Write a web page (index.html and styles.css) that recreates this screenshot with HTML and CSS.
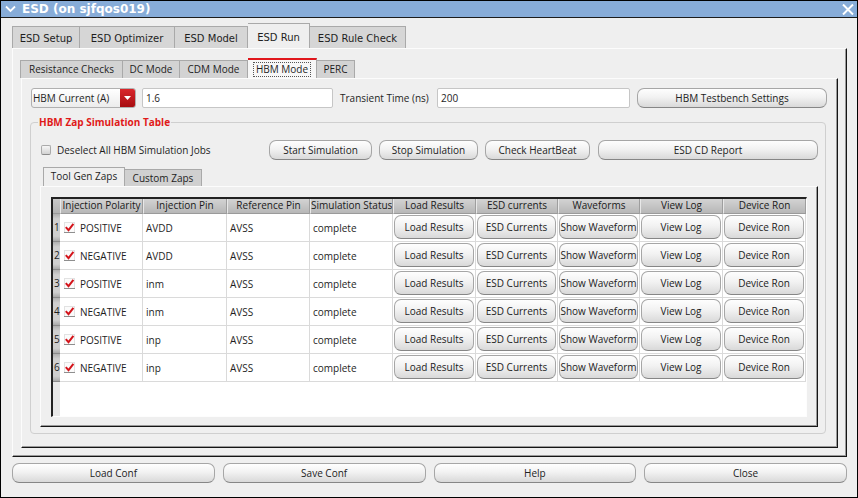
FILE: index.html
```html
<!DOCTYPE html>
<html>
<head>
<meta charset="utf-8">
<title>ESD</title>
<link rel="stylesheet" href="styles.css">
</head>
<body>
<div class="win">
  <div class="titlebar">
    <svg class="chev" width="11" height="8" viewBox="0 0 11 8"><polyline points="1,1.5 5.5,6 10,1.5" fill="none" stroke="#fff" stroke-width="1.8"/></svg>
    <span class="title">ESD (on sjfqos019)</span>
    <svg class="close" width="12" height="11" viewBox="0 0 12 11"><path d="M1 0.5 L11 10.5 M11 0.5 L1 10.5" stroke="#fff" stroke-width="2"/></svg>
  </div>
  <div class="content">
    <div class="tabs main-tabs">
      <div class="tab w-setup">ESD Setup</div>
      <div class="tab w-opt">ESD Optimizer</div>
      <div class="tab w-model">ESD Model</div>
      <div class="tab sel w-run">ESD Run</div>
      <div class="tab w-rule">ESD Rule Check</div>
    </div>
    <div class="panel main-panel">
      <div class="tabs sub-tabs">
        <div class="tab w-res">Resistance Checks</div>
        <div class="tab w-dc">DC Mode</div>
        <div class="tab w-cdm">CDM Mode</div>
        <div class="tab sel w-hbm"><span class="focus">HBM Mode</span></div>
        <div class="tab w-perc">PERC</div>
      </div>
      <div class="panel sub-panel">
        <div class="controls">
          <div class="combo"><span class="combo-text">HBM Current (A)</span><span class="combo-btn"><svg width="7" height="4" viewBox="0 0 7 4"><path d="M0 0 H7 L3.5 4 Z" fill="#fff"/></svg></span></div>
          <div class="field f1">1.6</div>
          <div class="lbl">Transient Time (ns)</div>
          <div class="field f2">200</div>
          <div class="btn b-tb">HBM Testbench Settings</div>
        </div>
        <fieldset class="group">
          <legend>HBM Zap Simulation Table</legend>
          <div class="actions">
            <span class="chk"></span>
            <span class="chk-lbl">Deselect All HBM Simulation Jobs</span>
            <div class="btn a1">Start Simulation</div>
            <div class="btn a2">Stop Simulation</div>
            <div class="btn a3">Check HeartBeat</div>
            <div class="btn a4">ESD CD Report</div>
          </div>
          <div class="tabs zap-tabs">
            <div class="tab sel w-tool">Tool Gen Zaps</div>
            <div class="tab w-custom">Custom Zaps</div>
          </div>
          <div class="panel zap-panel">
            <div class="tbl">
              <div class="corner"></div>
              <div class="th">Injection Polarity</div>
              <div class="th">Injection Pin</div>
              <div class="th">Reference Pin</div>
              <div class="th">Simulation Status</div>
              <div class="th">Load Results</div>
              <div class="th">ESD currents</div>
              <div class="th">Waveforms</div>
              <div class="th">View Log</div>
              <div class="th">Device Ron</div>

              <div class="rh">1</div>
              <div class="td"><svg class="ck" width="11" height="11" viewBox="0 0 11 11"><rect x="0.5" y="0.5" width="10" height="10" fill="#fbfbfb" stroke="#e2e2e2"/><line x1="0" y1="10.5" x2="11" y2="10.5" stroke="#8e8e8e"/><path d="M1.8 5.2 L4.5 8.2 L9.4 1.8" fill="none" stroke="#d3141b" stroke-width="2"/></svg>POSITIVE</div>
              <div class="td">AVDD</div>
              <div class="td">AVSS</div>
              <div class="td">complete</div>
              <div class="tb"><div class="btn">Load Results</div></div>
              <div class="tb"><div class="btn">ESD Currents</div></div>
              <div class="tb"><div class="btn">Show Waveform</div></div>
              <div class="tb"><div class="btn">View Log</div></div>
              <div class="tb"><div class="btn">Device Ron</div></div>

              <div class="rh">2</div>
              <div class="td"><svg class="ck" width="11" height="11" viewBox="0 0 11 11"><rect x="0.5" y="0.5" width="10" height="10" fill="#fbfbfb" stroke="#e2e2e2"/><line x1="0" y1="10.5" x2="11" y2="10.5" stroke="#8e8e8e"/><path d="M1.8 5.2 L4.5 8.2 L9.4 1.8" fill="none" stroke="#d3141b" stroke-width="2"/></svg>NEGATIVE</div>
              <div class="td">AVDD</div>
              <div class="td">AVSS</div>
              <div class="td">complete</div>
              <div class="tb"><div class="btn">Load Results</div></div>
              <div class="tb"><div class="btn">ESD Currents</div></div>
              <div class="tb"><div class="btn">Show Waveform</div></div>
              <div class="tb"><div class="btn">View Log</div></div>
              <div class="tb"><div class="btn">Device Ron</div></div>

              <div class="rh">3</div>
              <div class="td"><svg class="ck" width="11" height="11" viewBox="0 0 11 11"><rect x="0.5" y="0.5" width="10" height="10" fill="#fbfbfb" stroke="#e2e2e2"/><line x1="0" y1="10.5" x2="11" y2="10.5" stroke="#8e8e8e"/><path d="M1.8 5.2 L4.5 8.2 L9.4 1.8" fill="none" stroke="#d3141b" stroke-width="2"/></svg>POSITIVE</div>
              <div class="td">inm</div>
              <div class="td">AVSS</div>
              <div class="td">complete</div>
              <div class="tb"><div class="btn">Load Results</div></div>
              <div class="tb"><div class="btn">ESD Currents</div></div>
              <div class="tb"><div class="btn">Show Waveform</div></div>
              <div class="tb"><div class="btn">View Log</div></div>
              <div class="tb"><div class="btn">Device Ron</div></div>

              <div class="rh">4</div>
              <div class="td"><svg class="ck" width="11" height="11" viewBox="0 0 11 11"><rect x="0.5" y="0.5" width="10" height="10" fill="#fbfbfb" stroke="#e2e2e2"/><line x1="0" y1="10.5" x2="11" y2="10.5" stroke="#8e8e8e"/><path d="M1.8 5.2 L4.5 8.2 L9.4 1.8" fill="none" stroke="#d3141b" stroke-width="2"/></svg>NEGATIVE</div>
              <div class="td">inm</div>
              <div class="td">AVSS</div>
              <div class="td">complete</div>
              <div class="tb"><div class="btn">Load Results</div></div>
              <div class="tb"><div class="btn">ESD Currents</div></div>
              <div class="tb"><div class="btn">Show Waveform</div></div>
              <div class="tb"><div class="btn">View Log</div></div>
              <div class="tb"><div class="btn">Device Ron</div></div>

              <div class="rh">5</div>
              <div class="td"><svg class="ck" width="11" height="11" viewBox="0 0 11 11"><rect x="0.5" y="0.5" width="10" height="10" fill="#fbfbfb" stroke="#e2e2e2"/><line x1="0" y1="10.5" x2="11" y2="10.5" stroke="#8e8e8e"/><path d="M1.8 5.2 L4.5 8.2 L9.4 1.8" fill="none" stroke="#d3141b" stroke-width="2"/></svg>POSITIVE</div>
              <div class="td">inp</div>
              <div class="td">AVSS</div>
              <div class="td">complete</div>
              <div class="tb"><div class="btn">Load Results</div></div>
              <div class="tb"><div class="btn">ESD Currents</div></div>
              <div class="tb"><div class="btn">Show Waveform</div></div>
              <div class="tb"><div class="btn">View Log</div></div>
              <div class="tb"><div class="btn">Device Ron</div></div>

              <div class="rh">6</div>
              <div class="td"><svg class="ck" width="11" height="11" viewBox="0 0 11 11"><rect x="0.5" y="0.5" width="10" height="10" fill="#fbfbfb" stroke="#e2e2e2"/><line x1="0" y1="10.5" x2="11" y2="10.5" stroke="#8e8e8e"/><path d="M1.8 5.2 L4.5 8.2 L9.4 1.8" fill="none" stroke="#d3141b" stroke-width="2"/></svg>NEGATIVE</div>
              <div class="td">inp</div>
              <div class="td">AVSS</div>
              <div class="td">complete</div>
              <div class="tb"><div class="btn">Load Results</div></div>
              <div class="tb"><div class="btn">ESD Currents</div></div>
              <div class="tb"><div class="btn">Show Waveform</div></div>
              <div class="tb"><div class="btn">View Log</div></div>
              <div class="tb"><div class="btn">Device Ron</div></div>
            </div>
          </div>
        </fieldset>
      </div>
    </div>
    <div class="footer">
      <div class="btn">Load Conf</div>
      <div class="btn">Save Conf</div>
      <div class="btn">Help</div>
      <div class="btn">Close</div>
    </div>
  </div>
</div>
</body>
</html>
```
FILE: styles.css
```css
* { box-sizing: border-box; }
html, body { margin: 0; padding: 0; background: #efefef; }
body { font-family: "Open Sans", "DejaVu Sans", sans-serif; font-size: 10px; color: #1e1e1e; }

.win { width: 858px; height: 498px; border: 1px solid #000; background: #efefef; display: flex; flex-direction: column; overflow: hidden; }

.titlebar { flex: none; height: 17px; background: #87acd8; border-bottom: 1px solid #1c1c1c; display: flex; align-items: center; color: #fff; font: bold 12px/16px "DejaVu Sans", sans-serif; }
.chev { margin-left: 4px; flex: none; }
.title { margin-left: 6px; }
.close { margin-left: auto; margin-right: 3px; flex: none; }

.content { flex: 1; padding: 5px 10px 0 11px; display: flex; flex-direction: column; }

.tabs { display: flex; align-items: flex-end; flex: none; }
.tab { white-space: nowrap; text-align: center; border: 1px solid #a9a9a9; border-bottom: none; border-left: none; overflow: hidden; }
.tab:first-child { border-left: 1px solid #a9a9a9; }

.main-tabs .tab { height: 22px; font: 10px/23px "DejaVu Sans", sans-serif; background: #d6d6d6; color: #1e1e1e; }
.main-tabs .tab.sel { height: 25px; padding-top: 2px; background: #efefef; }
.w-setup { width: 68px; }
.w-opt { width: 95px; }
.w-model { width: 73px; }
.w-run { width: 62px; }
.w-rule { width: 96px; }

.panel { border: 1px solid; border-color: #fcfcfc #151515 #151515 #fcfcfc; box-shadow: inset -1px -1px 0 #9a9a9a; }

.main-panel { flex: none; height: 409px; padding: 9px 8px 8px 8px; display: flex; flex-direction: column; }

.sub-tabs { margin-left: -1px; }
.sub-tabs .tab { height: 18px; line-height: 17px; background: #d3d3d3; }
.sub-tabs .tab.sel { height: 20px; background: #f7f7f7; border-top: 2px solid #e0161b; display: flex; align-items: center; justify-content: center; }
.w-res { width: 103px; }
.w-dc { width: 57px; }
.w-cdm { width: 68px; }
.w-hbm { width: 69px; }
.w-perc { width: 38px; }
.focus { display: inline-block; line-height: 13px; border: 1px dotted #555; padding: 0 2px; }

.sub-panel { flex: 1; padding: 9px 9px 13px 9px; display: flex; flex-direction: column; }

.controls { display: flex; align-items: center; height: 20px; flex: none; }
.combo { width: 105px; height: 20px; display: flex; border: 1px solid #b0b0b0; border-radius: 3px; background: linear-gradient(#ffffff, #ececec); overflow: hidden; }
.combo-text { flex: 1; padding-left: 1px; line-height: 18px; }
.combo-btn { width: 15px; background: linear-gradient(#d9262b, #a70d11); display: flex; align-items: center; justify-content: center; }
.field { height: 20px; background: #fff; border: 1px solid #c6c6c6; border-radius: 2px; padding-left: 3px; line-height: 18px; }
.f1 { width: 191px; margin-left: 6px; }
.lbl { margin-left: 7px; width: 93px; white-space: nowrap; }
.f2 { width: 193px; margin-left: 4px; }
.b-tb { width: 190px; margin-left: 7px; }

.btn { display: flex; align-items: center; justify-content: center; height: 20px; border: 1px solid #a6a6a6; border-bottom-color: #868686; border-radius: 7px; background: linear-gradient(#fefefe 0%, #f2f2f2 45%, #d9d9d9 100%); color: #222; white-space: nowrap; overflow: hidden; line-height: 14px; }

.group { flex: 1; min-width: 0; margin: 8px 2px 0 -1px; padding: 12px 7px 4px 10px; border: 1px solid #cfcfcf; border-radius: 4px; display: flex; flex-direction: column; }
.group legend { margin-left: -3px; padding: 0 1px; font: bold 10px/12px "Open Sans", sans-serif; color: #e01a1a; }

.actions { display: flex; align-items: center; height: 20px; flex: none; }
.chk { width: 10px; height: 10px; border: 1px solid #aaaaaa; border-bottom-color: #8a8a8a; border-radius: 2px; background: linear-gradient(#f6f6f6, #d2d2d2); }
.chk-lbl { margin-left: 6px; white-space: nowrap; }
.a1 { margin-left: auto; width: 103px; }
.a2 { margin-left: 7px; width: 99px; }
.a3 { margin-left: 7px; width: 105px; }
.a4 { margin-left: 8px; width: 220px; }

.zap-tabs { margin-top: 7px; margin-left: 2px; }
.zap-tabs .tab { height: 17px; line-height: 16px; background: #d0d0d0; }
.zap-tabs .tab.sel { height: 19px; line-height: 17px; background: #efefef; }
.w-tool { width: 82px; }
.w-custom { width: 77px; }

.zap-panel { flex: 1; margin-left: -1px; padding: 10px 10px 9px 10px; }

.tbl { height: 220px; border-style: solid; border-width: 2px 1px 1px 2px; border-color: #222 #fdfdfd #fdfdfd #222; background: linear-gradient(to right, #e8e8e8 7px, #ffffff 7px); display: grid; grid-template-columns: 7px 83px 84px 83px 83px 83px 82px 82px 83px 83px; grid-template-rows: 15px repeat(6, 28px); align-content: start; }
.corner { background: linear-gradient(#c9c9c9, #b3b3b3); border-bottom: 1px solid #9a9a9a; }
.th { background: linear-gradient(#d3d3d3, #b7b7b7); border-left: 1px solid #e8e8e8; border-right: 1px solid #9e9e9e; border-bottom: 1px solid #9a9a9a; text-align: center; line-height: 12px; white-space: nowrap; overflow: hidden; color: #1a1a1a; }
.rh { background: linear-gradient(#b0b0b0, #cfcfcf 18%, #cfcfcf 82%, #aaaaaa); border-bottom: 1px solid #8a8a8a; padding-left: 1px; line-height: 27px; overflow: hidden; }
.td { display: flex; align-items: center; padding-left: 3px; border-right: 1px solid #dadada; border-bottom: 1px solid #dadada; line-height: 14px; white-space: nowrap; overflow: hidden; }
.ck { margin-left: 1px; margin-right: 5px; flex: none; }
.tb { padding: 1px 1px 2px 1px; border-right: 1px solid #dadada; border-bottom: 1px solid #dadada; }
.tb .btn { height: 24px; }

.footer { display: flex; gap: 8px; margin-top: 6px; flex: none; }
.footer .btn { flex: 1; height: 20px; }
```
